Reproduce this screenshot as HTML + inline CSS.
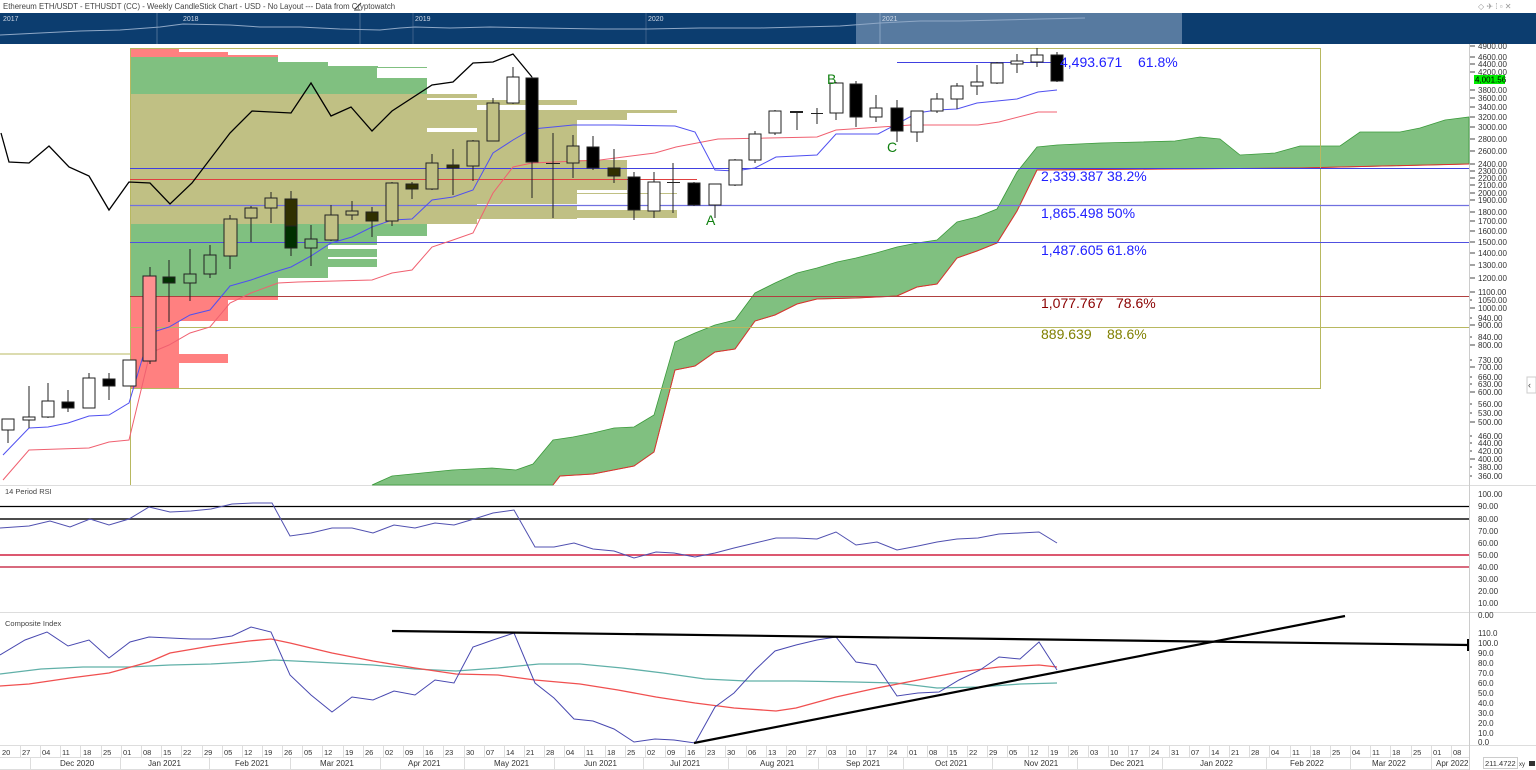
<!DOCTYPE html>
<html><head><meta charset="utf-8"><style>
html,body{margin:0;padding:0;background:#fff;width:1536px;height:770px;overflow:hidden}
svg{display:block;font-family:"Liberation Sans",sans-serif}
.ax{font-size:8px;fill:#333}
.d{font-size:7.5px;fill:#333}
.m{font-size:8px;fill:#333}
.fib{font-size:14px}
</style></head><body>
<svg width="1536" height="770" viewBox="0 0 1536 770" xmlns="http://www.w3.org/2000/svg">
<text x="3" y="9" font-size="7.8" fill="#444">Ethereum ETH/USDT - ETHUSDT (CC) - Weekly CandleStick Chart - USD - No Layout --- Data from Cryptowatch</text>
<path d="M355 9 L361 3 M354 10 L360 10" stroke="#333" stroke-width="1"/>
<text x="1478" y="9" font-size="8" fill="#999">◇ ✈ ⁞ ▫ ✕</text>
<rect x="0" y="13" width="1536" height="31" fill="#0c3d6f"/>
<rect x="856" y="13" width="326" height="31" fill="#577aa0"/>
<line x1="157" y1="13" x2="157" y2="44" stroke="#4d6e94" stroke-width="1"/>
<line x1="360" y1="13" x2="360" y2="44" stroke="#4d6e94" stroke-width="1"/>
<line x1="413" y1="13" x2="413" y2="44" stroke="#3b5f89"/>
<line x1="646" y1="13" x2="646" y2="44" stroke="#3b5f89"/>
<line x1="880" y1="13" x2="880" y2="44" stroke="#8aa4c2"/>
<text x="3" y="21" font-size="7" fill="#cfd8e6">2017</text>
<text x="183" y="21" font-size="7" fill="#cfd8e6">2018</text>
<text x="415" y="21" font-size="7" fill="#cfd8e6">2019</text>
<text x="648" y="21" font-size="7" fill="#cfd8e6">2020</text>
<text x="882" y="21" font-size="7" fill="#cfd8e6">2021</text>
<polyline fill="none" stroke="#8fa8c6" stroke-width="1" points="0,35 40,33 80,31 120,30 160,27 183,24 230,25 260,27 300,27 340,29 380,30 400,28 415,27 450,28 490,27 540,28 600,29 648,29 700,28 760,28 800,27 840,26 880,23 920,21 960,21 1000,20 1040,19 1085,18"/>
<line x1="0" y1="485.5" x2="1536" y2="485.5" stroke="#ddd"/>
<line x1="0" y1="612.5" x2="1536" y2="612.5" stroke="#ddd"/>
<line x1="0" y1="745.5" x2="1536" y2="745.5" stroke="#ddd"/>
<line x1="1469.5" y1="44" x2="1469.5" y2="770" stroke="#ccc"/>

<g>
<rect x="130" y="48" width="49" height="5" fill="#ff8080"/>
<rect x="130" y="52" width="98" height="4" fill="#ff8080"/>
<rect x="130" y="55" width="148" height="2" fill="#ff8080"/>
<rect x="130" y="57" width="148" height="6" fill="#80c080"/>
<rect x="130" y="62" width="198" height="5" fill="#80c080"/>
<rect x="130" y="66" width="248" height="2" fill="#80c080"/>
<rect x="130" y="67" width="247" height="11" fill="#80c080"/>
<rect x="377" y="67" width="50" height="1" fill="#80c080"/>
<rect x="130" y="78" width="297" height="16" fill="#80c080"/>
<rect x="130" y="94" width="347" height="130" fill="#c0c084"/>
<rect x="427" y="98" width="50" height="2" fill="#fff"/>
<rect x="427" y="128" width="50" height="4" fill="#fff"/>
<rect x="477" y="100" width="100" height="5" fill="#c0c084"/>
<rect x="477" y="110" width="200" height="3" fill="#c0c084"/>
<rect x="477" y="113" width="150" height="7" fill="#c0c084"/>
<rect x="477" y="120" width="100" height="40" fill="#c0c084"/>
<rect x="477" y="160" width="150" height="30" fill="#c0c084"/>
<rect x="477" y="190" width="100" height="14" fill="#c0c084"/>
<rect x="577" y="193" width="100" height="1" fill="#c0c084"/>
<rect x="577" y="172" width="50" height="12" fill="#c0c084"/>
<rect x="477" y="205" width="100" height="14" fill="#c0c084"/>
<rect x="577" y="210" width="100" height="8" fill="#c0c084"/>
<rect x="130" y="224" width="297" height="12" fill="#80c080"/>
<rect x="130" y="236" width="247" height="9" fill="#80c080"/>
<rect x="130" y="245" width="198" height="33" fill="#80c080"/>
<rect x="328" y="249" width="49" height="8" fill="#80c080"/>
<rect x="328" y="259" width="49" height="8" fill="#80c080"/>
<rect x="130" y="278" width="148" height="18" fill="#80c080"/>
<rect x="130" y="296" width="148" height="4" fill="#ff8080"/>
<rect x="130" y="300" width="98" height="21" fill="#ff8080"/>
<rect x="130" y="321" width="49" height="67" fill="#ff8080"/>
<rect x="179" y="354" width="49" height="9" fill="#ff8080"/>
</g>

<polygon fill="#80c080" stroke="#3a9a3a" stroke-width="0.8" points="372,485 392,476 452,470 492,468 516,470 533,464 553,440 573,437 593,433 614,428 634,427 654,415 675,342 695,333 715,325 735,320 755,293 775,283 797,273 817,268 837,262 856,258 876,253 897,247 917,243 937,240 957,222 977,217 997,209 1017,172 1037,147 1057,145 1100,143 1140,142 1175,141 1200,137 1220,139 1240,155 1275,153 1300,146 1340,146 1360,132 1400,132 1420,128 1445,120 1469,117 1469,164 1300,168 1037,170 1017,211 997,243 977,251 957,258 937,284 917,287 897,296 856,298 817,299 797,304 775,315 755,321 735,349 715,352 695,366 675,370 654,452 634,466 593,474 560,476 553,485"/>
<polyline fill="none" stroke="#e03030" stroke-width="1" points="553,485 560,476 593,474 634,466 654,452 675,370 695,366 715,352 735,349 755,321 775,315 797,304 817,299 856,298 897,296 917,287 937,284 957,258 977,251 997,243 1017,211 1037,170 1300,168 1469,164"/>

<rect x="130.5" y="48.5" width="1190" height="340" fill="none" stroke="#b8b860" stroke-width="1"/>
<line x1="0" y1="354" x2="130" y2="354" stroke="#b8b860"/>
<line x1="130.5" y1="48" x2="130.5" y2="485" stroke="#b8b860"/>
<line x1="130" y1="168.5" x2="1469" y2="168.5" stroke="#4040e0" stroke-width="1"/>
<line x1="130" y1="179.5" x2="697" y2="179.5" stroke="#e04040" stroke-width="1"/>
<line x1="130" y1="205.5" x2="1469" y2="205.5" stroke="#7070e0" stroke-width="1.2"/>
<line x1="130" y1="242.5" x2="1469" y2="242.5" stroke="#5050e0" stroke-width="1"/>
<line x1="130" y1="296.5" x2="1469" y2="296.5" stroke="#b04040" stroke-width="1"/>
<line x1="130" y1="327.5" x2="1469" y2="327.5" stroke="#b8b860" stroke-width="1"/>
<line x1="897" y1="62.5" x2="1060" y2="62.5" stroke="#4040e0" stroke-width="1"/>

<polyline fill="none" stroke="#000" stroke-width="1.3" points="1,133 9,162 29,163 49,146 69,167 89,176 109,210 129,182 150,183 170,204 192,183 230,133 252,111 291,113 311,83 331,116 351,107 372,131 392,111 432,85 453,82 473,63 493,62 513,54 532,77"/>
<polyline fill="none" stroke="#f06070" stroke-width="1" points="3,480 29,450 89,448 109,442 129,440 150,353 169,345 190,333 210,327 230,303 251,293 278,283 298,282 372,280 392,273 412,270 432,247 453,240 473,233 493,193 513,167 532,163 600,160 655,153 676,147 718,139 817,137 836,130 911,125 978,125 999,122 1038,112 1057,112"/>
<polyline fill="none" stroke="#5050f0" stroke-width="1" points="3,455 29,428 48,427 68,423 89,416 109,415 129,403 150,333 169,327 190,315 210,310 230,286 251,280 271,273 291,267 311,256 331,243 352,237 372,227 392,220 412,219 432,200 453,197 473,190 493,153 513,140 532,129 553,127 573,125 614,125 675,126 695,132 715,170 735,171 755,168 776,157 817,155 836,134 878,134 897,124 917,113 937,110 957,109 977,103 997,101 1017,99 1038,92 1057,90"/>

<g stroke="#222" stroke-width="1">
<line x1="8" y1="419" x2="8" y2="443"/><rect x="2" y="419" width="12" height="11" fill="#fff"/>
<line x1="29" y1="386" x2="29" y2="428"/><rect x="23" y="417" width="12" height="3" fill="#fff"/>
<line x1="48" y1="383" x2="48" y2="418"/><rect x="42" y="401" width="12" height="16" fill="#fff"/>
<line x1="68" y1="390" x2="68" y2="412"/><rect x="62" y="402" width="12" height="6" fill="#000"/>
<line x1="89" y1="373" x2="89" y2="408"/><rect x="83" y="378" width="12" height="30" fill="#fff"/>
<line x1="109" y1="373" x2="109" y2="400"/><rect x="103" y="379" width="12" height="7" fill="#000"/>
<line x1="129" y1="360" x2="129" y2="386"/><rect x="123" y="360" width="13" height="26" fill="#fff"/>
<line x1="150" y1="267" x2="150" y2="364"/><rect x="143" y="276" width="13" height="85" fill="#ff9090"/>
<line x1="169" y1="260" x2="169" y2="322"/><rect x="163" y="277" width="12" height="6" fill="#003000"/>
<line x1="190" y1="249" x2="190" y2="301"/><rect x="184" y="274" width="12" height="9" fill="#80c080"/>
<line x1="210" y1="245" x2="210" y2="278"/><rect x="204" y="255" width="12" height="19" fill="#80c080"/>
<line x1="230" y1="215" x2="230" y2="269"/><rect x="224" y="219" width="13" height="37" fill="#c0c084"/>
<line x1="251" y1="206" x2="251" y2="242"/><rect x="245" y="208" width="12" height="10" fill="#c0c084"/>
<line x1="271" y1="192" x2="271" y2="223"/><rect x="265" y="198" width="12" height="10" fill="#c0c084"/>
<line x1="291" y1="191" x2="291" y2="256"/><rect x="285" y="199" width="12" height="27" fill="#303000"/><rect x="285" y="226" width="12" height="22" fill="#003000"/>
<line x1="311" y1="225" x2="311" y2="266"/><rect x="305" y="239" width="12" height="9" fill="#80c080"/>
<line x1="331" y1="205" x2="331" y2="241"/><rect x="325" y="215" width="13" height="25" fill="#c0c084"/>
<line x1="352" y1="201" x2="352" y2="220"/><rect x="346" y="211" width="12" height="4" fill="#c0c084"/>
<line x1="372" y1="207" x2="372" y2="237"/><rect x="366" y="212" width="12" height="9" fill="#303000"/>
<line x1="392" y1="182" x2="392" y2="226"/><rect x="386" y="183" width="12" height="38" fill="#c0c084"/>
<line x1="412" y1="182" x2="412" y2="199"/><rect x="406" y="184" width="12" height="5" fill="#303000"/>
<line x1="432" y1="154" x2="432" y2="190"/><rect x="426" y="163" width="12" height="26" fill="#c0c084"/>
<line x1="453" y1="149" x2="453" y2="195"/><rect x="447" y="165" width="12" height="3" fill="#303000"/>
<line x1="473" y1="140" x2="473" y2="181"/><rect x="467" y="141" width="12" height="25" fill="#c0c084"/>
<line x1="493" y1="98" x2="493" y2="141"/><rect x="487" y="103" width="12" height="38" fill="#c0c084"/>
<line x1="513" y1="67" x2="513" y2="104"/><rect x="507" y="77" width="12" height="26" fill="#fff"/>
<line x1="532" y1="77" x2="532" y2="198"/><rect x="526" y="78" width="12" height="84" fill="#000"/>
<line x1="553" y1="133" x2="553" y2="218"/><line x1="546" y1="163.5" x2="560" y2="163.5"/>
<line x1="573" y1="135" x2="573" y2="178"/><rect x="567" y="146" width="12" height="17" fill="#c0c084"/>
<line x1="593" y1="136" x2="593" y2="170"/><rect x="587" y="147" width="12" height="21" fill="#000"/>
<line x1="614" y1="149" x2="614" y2="183"/><rect x="608" y="168" width="12" height="8" fill="#303000"/>
<line x1="634" y1="172" x2="634" y2="220"/><rect x="628" y="177" width="12" height="33" fill="#000"/>
<line x1="654" y1="172" x2="654" y2="218"/><rect x="648" y="182" width="12" height="29" fill="#fff"/>
<line x1="673" y1="163" x2="673" y2="213"/><line x1="667" y1="182.5" x2="680" y2="182.5"/>
<line x1="694" y1="182" x2="694" y2="206"/><rect x="688" y="183" width="12" height="22" fill="#000"/>
<line x1="715" y1="184" x2="715" y2="218"/><rect x="709" y="184" width="12" height="21" fill="#fff"/>
<line x1="735" y1="159" x2="735" y2="186"/><rect x="729" y="160" width="13" height="25" fill="#fff"/>
<line x1="755" y1="131" x2="755" y2="163"/><rect x="749" y="134" width="12" height="26" fill="#fff"/>
<line x1="775" y1="110" x2="775" y2="135"/><rect x="769" y="111" width="12" height="22" fill="#fff"/>
<line x1="797" y1="111" x2="797" y2="130"/><line x1="790" y1="112" x2="803" y2="112" stroke-width="2"/>
<line x1="817" y1="108" x2="817" y2="124"/><line x1="811" y1="113.5" x2="823" y2="113.5"/>
<line x1="836" y1="82" x2="836" y2="120"/><rect x="830" y="83" width="13" height="30" fill="#fff"/>
<line x1="856" y1="81" x2="856" y2="127"/><rect x="850" y="84" width="12" height="33" fill="#000"/>
<line x1="876" y1="95" x2="876" y2="122"/><rect x="870" y="108" width="12" height="9" fill="#fff"/>
<line x1="897" y1="100" x2="897" y2="142"/><rect x="891" y="108" width="12" height="23" fill="#000"/>
<line x1="917" y1="111" x2="917" y2="142"/><rect x="911" y="111" width="12" height="21" fill="#fff"/>
<line x1="937" y1="93" x2="937" y2="113"/><rect x="931" y="99" width="12" height="12" fill="#fff"/>
<line x1="957" y1="83" x2="957" y2="109"/><rect x="951" y="86" width="12" height="13" fill="#fff"/>
<line x1="977" y1="65" x2="977" y2="95"/><rect x="971" y="82" width="12" height="4" fill="#fff"/>
<line x1="997" y1="62" x2="997" y2="84"/><rect x="991" y="63" width="12" height="20" fill="#fff"/>
<line x1="1017" y1="54" x2="1017" y2="73"/><rect x="1011" y="61" width="12" height="3" fill="#fff"/>
<line x1="1037" y1="48" x2="1037" y2="67"/><rect x="1031" y="55" width="12" height="7" fill="#fff"/>
<line x1="1057" y1="52" x2="1057" y2="82"/><rect x="1051" y="55" width="12" height="26" fill="#000"/>
</g>

<text class="fib" x="1060" y="67" fill="#2020ff">4,493.671</text><text class="fib" x="1138" y="67" fill="#2020ff">61.8%</text>
<text class="fib" x="1041" y="181" fill="#2020ff">2,339.387</text><text class="fib" x="1107" y="181" fill="#2020ff">38.2%</text>
<text class="fib" x="1041" y="218" fill="#2020ff">1,865.498</text><text class="fib" x="1107" y="218" fill="#2020ff">50%</text>
<text class="fib" x="1041" y="255" fill="#2020ff">1,487.605</text><text class="fib" x="1107" y="255" fill="#2020ff">61.8%</text>
<text class="fib" x="1041" y="308" fill="#8b0000">1,077.767</text><text class="fib" x="1116" y="308" fill="#8b0000">78.6%</text>
<text class="fib" x="1041" y="339" fill="#808000">889.639</text><text class="fib" x="1107" y="339" fill="#808000">88.6%</text>
<text x="706" y="225" font-size="14" fill="#108010">A</text>
<text x="827" y="84" font-size="14" fill="#108010">B</text>
<text x="887" y="152" font-size="14" fill="#108010">C</text>

<g class="ax">
<text x="1478" y="49">4900.00</text><text x="1478" y="60">4600.00</text><text x="1478" y="67">4400.00</text><text x="1478" y="75">4200.00</text>
<text x="1478" y="93">3800.00</text><text x="1478" y="101">3600.00</text><text x="1478" y="110">3400.00</text><text x="1478" y="120">3200.00</text>
<text x="1478" y="130">3000.00</text><text x="1478" y="142">2800.00</text><text x="1478" y="154">2600.00</text><text x="1478" y="167">2400.00</text>
<text x="1478" y="174">2300.00</text><text x="1478" y="181">2200.00</text><text x="1478" y="188">2100.00</text><text x="1478" y="196">2000.00</text>
<text x="1478" y="203">1900.00</text><text x="1478" y="215">1800.00</text><text x="1478" y="224">1700.00</text><text x="1478" y="234">1600.00</text>
<text x="1478" y="245">1500.00</text><text x="1478" y="256">1400.00</text><text x="1478" y="268">1300.00</text><text x="1478" y="281">1200.00</text>
<text x="1478" y="295">1100.00</text><text x="1478" y="303">1050.00</text><text x="1478" y="311">1000.00</text><text x="1478" y="321">940.00</text>
<text x="1478" y="328">900.00</text><text x="1478" y="340">840.00</text><text x="1478" y="348">800.00</text><text x="1478" y="363">730.00</text>
<text x="1478" y="370">700.00</text><text x="1478" y="380">660.00</text><text x="1478" y="387">630.00</text><text x="1478" y="395">600.00</text>
<text x="1478" y="407">560.00</text><text x="1478" y="416">530.00</text><text x="1478" y="425">500.00</text><text x="1478" y="439">460.00</text>
<text x="1478" y="446">440.00</text><text x="1478" y="454">420.00</text><text x="1478" y="462">400.00</text><text x="1478" y="470">380.00</text>
<text x="1478" y="479">360.00</text>
</g>
<path stroke="#444" stroke-width="1" d="M1470 46h5M1470 57h5M1470 64h5M1470 72h5M1470 90h5M1470 98h5M1470 107h5M1470 117h5M1470 127h5M1470 139h5M1470 151h5M1470 164h5M1470 171h5M1470 178h5M1470 185h5M1470 193h5M1470 200h5M1470 212h5M1470 221h5M1470 231h5M1470 242h5M1470 253h5M1470 265h5M1470 278h5M1470 292h5M1470 300h2M1470 308h5M1470 318h2M1470 325h5M1470 337h2M1470 345h5M1470 360h2M1470 367h5M1470 377h2M1470 384h2M1470 392h5M1470 404h2M1470 413h2M1470 422h5M1470 436h2M1470 443h2M1470 451h2M1470 459h5M1470 467h2M1470 476h2"/>
<rect x="1474" y="75" width="31" height="9" fill="#00ee00"/>
<text x="1475" y="82.5" font-size="8" fill="#000">4,001.56</text>
<rect x="1527" y="377" width="9" height="16" fill="#fff" stroke="#ccc"/>
<text x="1528" y="388" font-size="9" fill="#444">‹</text>

<text x="5" y="494" font-size="7.5" fill="#444">14 Period RSI</text>
<line x1="0" y1="506.5" x2="1469" y2="506.5" stroke="#000" stroke-width="1.3"/>
<line x1="0" y1="519" x2="1469" y2="519" stroke="#333" stroke-width="1.8"/>
<line x1="0" y1="555" x2="1469" y2="555" stroke="#d02040" stroke-width="1.5"/>
<line x1="0" y1="567" x2="1469" y2="567" stroke="#c01030" stroke-width="1.2"/>
<polyline fill="none" stroke="#5050b0" stroke-width="1" points="0,528 29,526 50,521 70,527 90,519 109,525 129,519 149,507 170,512 191,511 211,509 232,504 253,503 272,503 290,536 311,533 332,528 352,528 373,533 394,525 415,528 435,523 454,525 474,519 493,513 514,510 535,547 554,547 574,543 593,549 614,551 634,558 656,552 674,553 695,557 715,553 734,548 755,543 776,538 796,538 817,539 836,532 856,545 877,542 897,550 918,546 937,542 957,539 978,538 999,534 1020,533 1039,532 1057,543"/>
<g class="ax">
<text x="1478" y="497">100.00</text><text x="1478" y="509">90.00</text><text x="1478" y="522">80.00</text><text x="1478" y="534">70.00</text>
<text x="1478" y="546">60.00</text><text x="1478" y="558">50.00</text><text x="1478" y="570">40.00</text><text x="1478" y="582">30.00</text>
<text x="1478" y="594">20.00</text><text x="1478" y="606">10.00</text><text x="1478" y="618">0.00</text>
</g>

<text x="5" y="626" font-size="7.5" fill="#444">Composite Index</text>
<polyline fill="none" stroke="#60b0a8" stroke-width="1.3" points="0,674 41,669 83,667 129,667 170,665 211,664 249,662 274,660 315,662 373,665 415,669 456,671 498,668 539,664 580,664 622,668 663,673 705,679 746,681 796,681 854,682 896,683 937,688 979,687 1020,684 1057,683"/>
<polyline fill="none" stroke="#f05050" stroke-width="1.3" points="0,686 29,684 70,678 109,673 149,662 170,653 211,646 249,641 271,639 290,643 332,653 373,661 415,668 456,674 498,675 535,680 580,684 618,690 656,697 695,703 734,708 776,711 796,708 836,697 877,688 918,680 959,672 999,667 1039,665 1057,667"/>
<polyline fill="none" stroke="#4848b0" stroke-width="1" points="0,655 25,640 47,632 68,646 89,640 109,658 130,642 149,637 170,638 191,639 211,639 232,636 251,627 271,632 290,675 311,695 332,712 352,697 373,700 394,691 415,695 435,680 454,683 473,647 493,640 514,633 535,683 554,698 574,719 593,721 614,729 634,742 655,739 674,740 695,743 715,707 734,693 755,670 775,651 796,645 817,640 836,637 856,662 876,665 897,696 918,693 939,692 959,680 980,670 999,657 1020,659 1039,642 1057,670"/>
<line x1="392" y1="631" x2="1469" y2="645" stroke="#000" stroke-width="2.2"/>
<line x1="1468" y1="639" x2="1468" y2="651" stroke="#000" stroke-width="2"/>
<line x1="694" y1="743" x2="1345" y2="616" stroke="#000" stroke-width="2.2"/>
<g class="ax">
<text x="1478" y="636">110.0</text><text x="1478" y="646">100.0</text><text x="1478" y="656">90.0</text><text x="1478" y="666">80.0</text>
<text x="1478" y="676">70.0</text><text x="1478" y="686">60.0</text><text x="1478" y="696">50.0</text><text x="1478" y="706">40.0</text>
<text x="1478" y="716">30.0</text><text x="1478" y="726">20.0</text><text x="1478" y="736">10.0</text><text x="1478" y="745">0.0</text>
</g>

<rect x="0" y="746" width="1469" height="24" fill="#fff"/>
<line x1="0" y1="757.5" x2="1469" y2="757.5" stroke="#ddd"/>
<line x1="0" y1="769.5" x2="1469" y2="769.5" stroke="#ddd"/>
<g class="d">
<text x="2" y="755">20</text><text x="22" y="755">27</text><text x="42" y="755">04</text><text x="62" y="755">11</text><text x="83" y="755">18</text><text x="103" y="755">25</text><text x="123" y="755">01</text><text x="143" y="755">08</text><text x="163" y="755">15</text><text x="183" y="755">22</text><text x="204" y="755">29</text><text x="224" y="755">05</text><text x="244" y="755">12</text><text x="264" y="755">19</text><text x="284" y="755">26</text><text x="304" y="755">05</text><text x="324" y="755">12</text><text x="345" y="755">19</text><text x="365" y="755">26</text><text x="385" y="755">02</text><text x="405" y="755">09</text><text x="425" y="755">16</text><text x="445" y="755">23</text><text x="466" y="755">30</text><text x="486" y="755">07</text><text x="506" y="755">14</text><text x="526" y="755">21</text><text x="546" y="755">28</text><text x="566" y="755">04</text><text x="586" y="755">11</text><text x="607" y="755">18</text><text x="627" y="755">25</text><text x="647" y="755">02</text><text x="667" y="755">09</text><text x="687" y="755">16</text><text x="707" y="755">23</text><text x="727" y="755">30</text><text x="748" y="755">06</text><text x="768" y="755">13</text><text x="788" y="755">20</text><text x="808" y="755">27</text><text x="828" y="755">03</text><text x="848" y="755">10</text><text x="868" y="755">17</text><text x="889" y="755">24</text><text x="909" y="755">01</text><text x="929" y="755">08</text><text x="949" y="755">15</text><text x="969" y="755">22</text><text x="989" y="755">29</text><text x="1009" y="755">05</text><text x="1030" y="755">12</text><text x="1050" y="755">19</text><text x="1070" y="755">26</text><text x="1090" y="755">03</text><text x="1110" y="755">10</text><text x="1130" y="755">17</text><text x="1151" y="755">24</text><text x="1171" y="755">31</text><text x="1191" y="755">07</text><text x="1211" y="755">14</text><text x="1231" y="755">21</text><text x="1251" y="755">28</text><text x="1271" y="755">04</text><text x="1292" y="755">11</text><text x="1312" y="755">18</text><text x="1332" y="755">25</text><text x="1352" y="755">04</text><text x="1372" y="755">11</text><text x="1392" y="755">18</text><text x="1413" y="755">25</text><text x="1433" y="755">01</text><text x="1453" y="755">08</text>
</g>
<path stroke="#ddd" d="M20.5 746v11M40.5 746v11M60.5 746v11M80.5 746v11M101.5 746v11M121.5 746v11M141.5 746v11M161.5 746v11M181.5 746v11M202.5 746v11M222.5 746v11M242.5 746v11M262.5 746v11M282.5 746v11M302.5 746v11M322.5 746v11M343.5 746v11M363.5 746v11M383.5 746v11M403.5 746v11M423.5 746v11M443.5 746v11M464.5 746v11M484.5 746v11M504.5 746v11M524.5 746v11M544.5 746v11M564.5 746v11M584.5 746v11M605.5 746v11M625.5 746v11M645.5 746v11M665.5 746v11M685.5 746v11M705.5 746v11M725.5 746v11M746.5 746v11M766.5 746v11M786.5 746v11M806.5 746v11M826.5 746v11M846.5 746v11M866.5 746v11M887.5 746v11M907.5 746v11M927.5 746v11M947.5 746v11M967.5 746v11M987.5 746v11M1007.5 746v11M1028.5 746v11M1048.5 746v11M1068.5 746v11M1088.5 746v11M1108.5 746v11M1128.5 746v11M1149.5 746v11M1169.5 746v11M1189.5 746v11M1209.5 746v11M1229.5 746v11M1249.5 746v11M1269.5 746v11M1290.5 746v11M1310.5 746v11M1330.5 746v11M1350.5 746v11M1370.5 746v11M1390.5 746v11M1411.5 746v11M1431.5 746v11M1451.5 746v11M30.5 757v12M120.5 757v12M209.5 757v12M290.5 757v12M380.5 757v12M464.5 757v12M554.5 757v12M643.5 757v12M728.5 757v12M818.5 757v12M903.5 757v12M992.5 757v12M1077.5 757v12M1162.5 757v12M1266.5 757v12M1350.5 757v12M1431.5 757v12"/>
<g class="m">
<text x="60" y="766">Dec 2020</text><text x="148" y="766">Jan 2021</text><text x="235" y="766">Feb 2021</text><text x="320" y="766">Mar 2021</text>
<text x="408" y="766">Apr 2021</text><text x="494" y="766">May 2021</text><text x="584" y="766">Jun 2021</text><text x="670" y="766">Jul 2021</text>
<text x="760" y="766">Aug 2021</text><text x="846" y="766">Sep 2021</text><text x="935" y="766">Oct 2021</text><text x="1024" y="766">Nov 2021</text>
<text x="1110" y="766">Dec 2021</text><text x="1200" y="766">Jan 2022</text><text x="1290" y="766">Feb 2022</text><text x="1372" y="766">Mar 2022</text>
<text x="1436" y="766">Apr 2022</text>
</g>
<rect x="1483.5" y="757.5" width="34" height="11" fill="#fff" stroke="#ccc"/>
<text x="1485" y="766" font-size="7.5" fill="#333">211.4722</text>
<text x="1519" y="766" font-size="6" fill="#333">xy</text>
<rect x="1529" y="761" width="6" height="5" fill="#333"/>
</svg>
</body></html>
